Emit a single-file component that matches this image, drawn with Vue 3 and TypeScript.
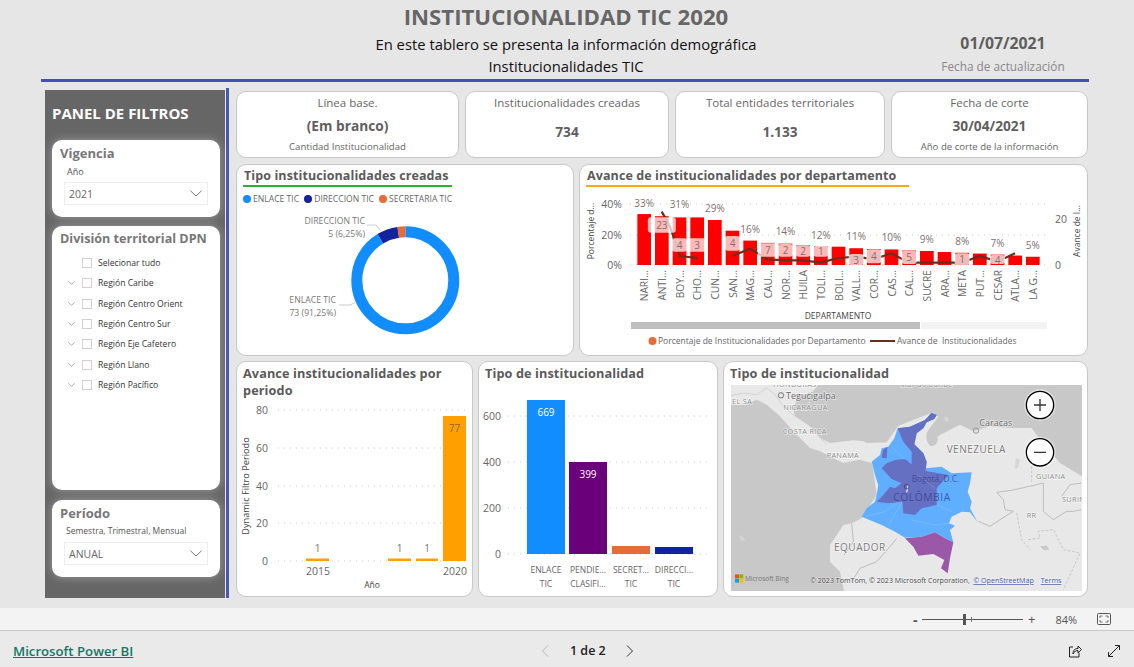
<script setup lang="ts">
interface Dept { name: string; pct: number }
interface Pill { i: number; v: number; top: number; bottom: number; w: number }

const zx = (z: number) => 575 + z / 3
const zy = (z: number) => 160 + z / 3

const depts: Dept[] = [
  { name: 'NARI...', pct: 33.4 }, { name: 'ANTI...', pct: 32 }, { name: 'BOY...', pct: 31.2 }, { name: 'CHO...', pct: 31.2 },
  { name: 'CUN...', pct: 29.5 }, { name: 'SAN...', pct: 22.5 }, { name: 'MAG...', pct: 16 }, { name: 'CAU...', pct: 14.5 },
  { name: 'NOR...', pct: 14 }, { name: 'HUILA', pct: 13 }, { name: 'TOLI...', pct: 12.3 }, { name: 'BOLI...', pct: 12 },
  { name: 'VALL...', pct: 11 }, { name: 'COR...', pct: 10.5 }, { name: 'CAS...', pct: 10.2 }, { name: 'CAL...', pct: 9.5 },
  { name: 'SUCRE', pct: 9.2 }, { name: 'ARA...', pct: 8.5 }, { name: 'META', pct: 8 }, { name: 'PUT...', pct: 7.5 },
  { name: 'CESAR', pct: 6.8 }, { name: 'ATLA...', pct: 6.2 }, { name: 'LA G...', pct: 5.4 },
]
const barX = (i: number) => zx(187 + i * 53)
const barW = 13.7

const pctLabels = [
  { i: 0, t: '33%', y: 130 }, { i: 2, t: '31%', y: 133 }, { i: 4, t: '29%', y: 143 }, { i: 6, t: '16%', y: 208 },
  { i: 8, t: '14%', y: 214 }, { i: 10, t: '12%', y: 224 }, { i: 12, t: '11%', y: 229 }, { i: 14, t: '10%', y: 232 },
  { i: 16, t: '9%', y: 238 }, { i: 18, t: '8%', y: 244 }, { i: 20, t: '7%', y: 250 }, { i: 22, t: '5%', y: 254 },
]

const pills: Pill[] = [
  { i: 1, v: 23, top: 172, bottom: 218, w: 28 }, { i: 2, v: 4, top: 235, bottom: 275, w: 15 }, { i: 3, v: 3, top: 235, bottom: 275, w: 21 },
  { i: 5, v: 4, top: 228, bottom: 272, w: 15 }, { i: 7, v: 7, top: 250, bottom: 290, w: 20 }, { i: 8, v: 2, top: 252, bottom: 290, w: 15 },
  { i: 9, v: 2, top: 256, bottom: 290, w: 15 }, { i: 10, v: 1, top: 258, bottom: 290, w: 15 }, { i: 12, v: 3, top: 282, bottom: 316, w: 15 },
  { i: 13, v: 4, top: 268, bottom: 310, w: 15 }, { i: 15, v: 5, top: 272, bottom: 312, w: 15 }, { i: 18, v: 1, top: 280, bottom: 316, w: 15 },
  { i: 20, v: 4, top: 285, bottom: 312, w: 15 },
]

const toPts = (pts: number[][]) => pts.map(p => `${zx(p[0])},${zy(p[1])}`).join(' ')
const lineA = toPts([[260, 155], [270, 172], [285, 200], [315, 288], [367, 294]])
const lineB = toPts([
  [472, 288], [525, 266], [578, 298], [631, 301], [684, 301], [737, 308], [790, 294], [843, 290], [896, 298],
  [949, 280], [1002, 308], [1055, 308], [1108, 308], [1161, 308], [1214, 288], [1267, 305], [1320, 280],
])

const regions = ['Región Caribe', 'Región Centro Orient', 'Región Centro Sur', 'Región Eje Cafetero', 'Región Llano', 'Región Pacífico']

const ringLen = 2 * Math.PI * 48.5
const slices = [
  { color: '#118dff', share: 0.9125, start: 0 },
  { color: '#12239e', share: 0.0625, start: 0.9125 },
  { color: '#e66c37', share: 0.025, start: 0.975 },
]

const periodTicks = [{ t: '80', y: 410 }, { t: '60', y: 448 }, { t: '40', y: 486 }, { t: '20', y: 523 }, { t: '0', y: 561 }]
const periodBars = [
  { x: 306, top: 558.5, w: 23, label: '1', ly: 548 }, { x: 388, top: 558.5, w: 23, label: '1', ly: 548 },
  { x: 416, top: 558.5, w: 22, label: '1', ly: 548 }, { x: 443, top: 416, w: 23, label: '', ly: 0 },
]
const typeTicks = [{ t: '600', y: 416 }, { t: '400', y: 462 }, { t: '200', y: 508 }, { t: '0', y: 554 }]
const typeBars = [
  { x: 527, top: 400, color: '#118dff', a: 'ENLACE', b: 'TIC' }, { x: 569, top: 462, color: '#6b007b', a: 'PENDIE...', b: 'CLASIFI...' },
  { x: 612, top: 546, color: '#e66c37', a: 'SECRET...', b: 'TIC' }, { x: 655, top: 547, color: '#12239e', a: 'DIRECCI...', b: 'TIC' },
]
</script>

<template>
  <div class="page">
    <header class="head">
      <div class="head-main">
        <h1>INSTITUCIONALIDAD TIC 2020</h1>
        <p>En este tablero se presenta la información demográfica</p>
        <p>Institucionalidades TIC</p>
      </div>
      <div class="head-date">
        <strong>01/07/2021</strong>
        <span>Fecha de actualización</span>
      </div>
    </header>
    <div class="rule"></div>

    <main class="report">
      <aside class="side-wrap">
        <div class="side">
          <h2>PANEL DE FILTROS</h2>
          <section class="filter f-vig">
            <h3>Vigencia</h3>
            <label>Año</label>
            <div class="select">
              <span>2021</span>
              <svg width="12" height="7" viewBox="0 0 12 7"><path d="M.5.8 6 6 11.5.8" fill="none" stroke="#777" /></svg>
            </div>
          </section>
          <section class="filter f-div">
            <h3>División territorial DPN</h3>
            <ul>
              <li><i class="chev-gap"></i><i class="check"></i>Selecionar tudo</li>
              <li v-for="r in regions" :key="r">
                <svg class="chev" width="7" height="4" viewBox="0 0 7 4"><path d="M.3.3 3.5 3.3 6.7.3" fill="none" stroke="#999" stroke-width=".8" /></svg>
                <i class="check"></i>{{ r }}
              </li>
            </ul>
          </section>
          <section class="filter f-per">
            <h3>Período</h3>
            <label>Semestra, Trimestral, Mensual</label>
            <div class="select">
              <span>ANUAL</span>
              <svg width="12" height="7" viewBox="0 0 12 7"><path d="M.5.8 6 6 11.5.8" fill="none" stroke="#777" /></svg>
            </div>
          </section>
        </div>
      </aside>

      <div class="content">
        <div class="row r1">
          <div class="card kpi" style="width: 223px">
            <span class="k-t">Línea base.</span><b>(Em branco)</b><small>Cantidad Institucionalidad</small>
          </div>
          <div class="card kpi" style="width: 204px">
            <span class="k-t">Institucionalidades creadas</span><b class="low">734</b>
          </div>
          <div class="card kpi" style="width: 210px">
            <span class="k-t">Total entidades territoriales</span><b class="low">1.133</b>
          </div>
          <div class="card kpi" style="width: 197px">
            <span class="k-t">Fecha de corte</span><b>30/04/2021</b><small>Año de corte de la información</small>
          </div>
        </div>

        <div class="row r2">
          <div class="card" style="width: 338px">
            <div class="title green">Tipo institucionalidades creadas</div>
            <div class="legend">
              <span><i style="background: #118dff"></i>ENLACE TIC</span>
              <span><i style="background: #12239e"></i>DIRECCION TIC</span>
              <span><i style="background: #e66c37"></i>SECRETARIA TIC</span>
            </div>
            <svg class="chart" width="336" height="148" viewBox="237 207 336 148">
              <circle
                v-for="s in slices"
                :key="s.color"
                cx="405.3"
                cy="280.3"
                r="48.5"
                fill="none"
                :stroke="s.color"
                stroke-width="11"
                :stroke-dasharray="`${s.share * ringLen} ${ringLen}`"
                :stroke-dashoffset="-s.start * ringLen"
                transform="rotate(-90 405.3 280.3)"
              />
              <path d="M367 225h9l5 6M339 305h11l5-2.500" fill="none" stroke="#ccc" />
              <g class="tx" text-anchor="end">
                <text x="365" y="224">DIRECCION TIC</text>
                <text x="365" y="237">5 (6,25%)</text>
                <text x="336" y="303">ENLACE TIC</text>
                <text x="336" y="316">73 (91,25%)</text>
              </g>
            </svg>
          </div>

          <div class="card" style="width: 509px">
            <div class="title orange">Avance de institucionalidades por departamento</div>
            <svg class="chart" width="507" height="164" viewBox="580 191 507 164">
              <path v-for="y in [204, 235, 265]" :key="y" :d="`M630 ${y}H1047`" class="grid" />
              <rect v-for="(d, i) in depts" :key="d.name" :x="barX(i)" :y="265 - d.pct * 1.525" :width="barW" :height="d.pct * 1.525" fill="#ff0000" />
              <polyline :points="lineA" class="trend" />
              <polyline :points="lineB" class="trend" />
              <rect
                v-for="p in pills"
                :key="p.i"
                :x="barX(p.i) + barW / 2 - p.w / 2"
                :y="zy(p.top)"
                :width="p.w"
                :height="(p.bottom - p.top) / 3"
                rx="3"
                fill="#fff"
                fill-opacity=".72"
              />
              <text v-for="p in pills" :key="'v' + p.i" class="tx lab" text-anchor="middle" :x="barX(p.i) + barW / 2" :y="zy((p.top + p.bottom) / 2) + 4">{{ p.v }}</text>
              <text v-for="l in pctLabels" :key="l.t" class="tx lab" text-anchor="middle" :x="barX(l.i) + barW / 2" :y="zy(l.y) + 4">{{ l.t }}</text>
              <g class="tx ax" text-anchor="end">
                <text x="622" y="208">40%</text>
                <text x="622" y="239">20%</text>
                <text x="622" y="269">0%</text>
              </g>
              <g class="tx ax">
                <text x="1055" y="223">20</text>
                <text x="1055" y="269">0</text>
              </g>
              <text class="tx small dark" text-anchor="middle" transform="translate(594 231) rotate(-90)">Porcentaje d...</text>
              <text class="tx small dark" text-anchor="middle" transform="translate(1080 231) rotate(-90)">Avance de I...</text>
              <text
                v-for="(d, i) in depts"
                :key="'n' + d.name"
                class="tx cat"
                text-anchor="end"
                :transform="`translate(${barX(i) + barW / 2 + 4} 270) rotate(-90)`"
              >{{ d.name }}</text>
              <text class="tx small dark" x="838" y="319" text-anchor="middle">DEPARTAMENTO</text>
              <rect x="631" y="322" width="289" height="7" fill="#bfbfbf" />
              <rect x="921" y="322" width="126" height="7" fill="#f3f3f3" />
              <circle cx="652.500" cy="341" r="4" fill="#e66c37" />
              <text class="tx leg" x="658" y="344">Porcentaje de Institucionalidades por Departamento</text>
              <path d="M870 341h25" stroke="#6b2d1c" stroke-width="2" />
              <text class="tx leg" x="897" y="344">Avance de &nbsp;Institucionalidades</text>
            </svg>
          </div>
        </div>

        <div class="row r3">
          <div class="card" style="width: 237px">
            <div class="title plain">Avance institucionalidades por periodo</div>
            <svg class="chart" width="235" height="194" viewBox="237 402 235 194">
              <path v-for="t in periodTicks" :key="t.t" :d="`M278 ${t.y}H465`" class="grid" />
              <text v-for="t in periodTicks" :key="'l' + t.t" class="tx ax" x="268" text-anchor="end" :y="t.y + 4">{{ t.t }}</text>
              <rect v-for="b in periodBars" :key="b.x" :x="b.x" :y="b.top" :width="b.w" :height="561 - b.top" fill="#ffa000" />
              <g v-for="b in periodBars" :key="'t' + b.x">
                <text v-if="b.label" class="tx lab" text-anchor="middle" :x="b.x + b.w / 2" :y="b.ly + 4">{{ b.label }}</text>
              </g>
              <text class="tx lab amber" x="454.500" y="432" text-anchor="middle">77</text>
              <text class="tx ax" x="318" y="575" text-anchor="middle">2015</text>
              <text class="tx ax" x="455" y="575" text-anchor="middle">2020</text>
              <text class="tx small dark" x="372" y="588" text-anchor="middle">Año</text>
              <text class="tx axt dark" text-anchor="middle" transform="translate(249 486) rotate(-90)">Dynamic Filtro Periodo</text>
            </svg>
          </div>

          <div class="card" style="width: 240px">
            <div class="title plain">Tipo de institucionalidad</div>
            <svg class="chart" width="238" height="211" viewBox="479 385 238 211">
              <path v-for="t in typeTicks" :key="t.t" :d="`M508 ${t.y}H712`" class="grid" />
              <text v-for="t in typeTicks" :key="'l' + t.t" class="tx ax" x="501" text-anchor="end" :y="t.y + 4">{{ t.t }}</text>
              <rect v-for="b in typeBars" :key="b.x" :x="b.x" :y="b.top" width="38" :height="554 - b.top" :fill="b.color" />
              <text class="tx lab white" x="546" y="416" text-anchor="middle">669</text>
              <text class="tx lab white" x="588" y="478" text-anchor="middle">399</text>
              <g v-for="b in typeBars" :key="b.a" class="tx small" text-anchor="middle">
                <text :x="b.x + 19" y="573">{{ b.a }}</text>
                <text :x="b.x + 19" y="587">{{ b.b }}</text>
              </g>
            </svg>
          </div>

          <div class="card" style="width: 365px">
            <div class="title plain">Tipo de institucionalidad</div>
            <svg class="map" width="351" height="206" viewBox="33 90 1053 618">
              <rect x="33" y="90" width="1053" height="618" fill="#c8c8c8" />
              <!-- land, west part is drawn in the Central America crop's units -->
              <g transform="translate(30 84)">
                <path d="M0 5H265L250 25 205 42 190 75 195 100 240 130 270 165 300 180 370 172 400 175 440 195 470 215 480 300 425 240 390 230 340 240 310 225 270 205 240 195 195 150 150 100 110 65 80 50 45 65H0Z" fill="#e8e8e8" />
                <path d="M0 38 40 30 80 35 110 15 135 35 160 70 195 100M240 130 290 185" fill="none" stroke="#d2d2d2" stroke-width="3" />
              </g>
              <path d="M430 265 500 262 535 212 640 172 655 185 625 225 628 262 660 240 720 209 760 229 810 214 870 219 935 219 975 274 1020 324 1086 364V708H372L360 650 330 620 330 570 350 540 370 510 395 505 425 490 470 420 456 320Z" fill="#e8e8e8" />
              <path d="M620 235C625 222 640 225 650 240 660 258 645 278 630 272 620 262 618 250 620 235Z" fill="#c8c8c8" />
              <path d="M672 185l12 2 3 10-12 1ZM888 310l12 4-6 24-10 4ZM55 540l12 5 10 15-12-4Z" fill="#d6d6d6" />
              <g transform="translate(720 84)" fill="none" stroke="#bdbdbd" stroke-width="3">
                <path d="M110 328 155 322 230 305 250 300 250 340 250 385 280 410 320 385 340 385 365 380M110 328 130 350 135 380 160 385 120 410 90 430 55 415M305 340 330 305 365 300" />
                <path d="M170 390 185 470 210 500M205 470 240 465 235 445 280 440 310 500 360 510 310 620M215 250V295" stroke-dasharray="8 5" stroke-width="2.500" />
                <path d="M240 490l20-2 8 12-16 2Z" fill="#c8c8c8" stroke="none" />
              </g>
              <path d="M530 550 510 575 470 620 420 640 395 680M395 505 400 560 372 600" fill="none" stroke="#bdbdbd" stroke-width="3" />
              <g class="mtx">
                <text x="540" y="95" class="lt">Mar do Caribe</text>
                <text x="160" y="95" class="lt">HONDURAS</text>
                <text x="36" y="146" class="lt">EL SA</text>
                <text x="198" y="131">Tegucigalpa</text>
                <text x="190" y="166" class="lt">NICARÁGUA</text>
                <text x="188" y="237" class="lt">COSTA RICA</text>
                <text x="320" y="308" class="lt">PANAMÁ</text>
                <text x="778" y="214">Caracas</text>
                <text x="680" y="295" class="big">VENEZUELA</text>
                <text x="948" y="373" class="lt">GUIANA</text>
                <text x="1026" y="440" class="lt">SURIN</text>
                <text x="920" y="489" class="lt">RR</text>
                <text x="342" y="587" class="big">EQUADOR</text>
              </g>
              <!-- Colombia, in the units of the country crop -->
              <g transform="translate(405 150)">
                <path d="M128 70 165 65 210 45 230 23 245 30 238 42 215 52 205 70 185 85 178 118 205 145 215 170 212 190 260 185 290 205 350 202 345 235 338 260 350 290 345 310 368 352 345 322 320 320 290 335 282 355 300 362 285 375 295 412 270 400 240 382 200 395 150 398 120 380 80 360 20 335 35 310 60 290 65 270 70 240 60 210 50 170 75 150 80 130 100 125 118 100Z" fill="#60aeff" />
                <path d="M128 70 165 65 210 45 230 23 245 30 238 42 215 52 205 70 185 85 178 118 205 145 215 170 212 198 280 210 245 250 245 300 200 310 180 330 145 325 142 290 100 295 65 290 85 270 105 245 120 250 140 235 110 222 80 190 95 175 120 165 150 162 170 178 170 140 145 110Z" fill="#6570c2" />
                <path d="M80 158 84 135 97 125 95 160Z" fill="#6570c2" />
                <path d="M150 400 200 395 240 382 270 400 295 412 285 460 278 505 258 490 268 465 235 447 190 452 175 425Z" fill="#9b58a8" />
                <path d="M30 335 90 320 130 290M170 345 240 360 282 355M245 300 290 320M142 290 100 360M190 210 240 250M110 125 150 165" fill="none" stroke="#fff" stroke-opacity=".3" stroke-width="1.500" />
                <path d="M160 240 155 262" stroke="#fff" stroke-width="3.500" />
                <circle cx="155" cy="245" r="7" fill="none" stroke="#3a3f8f" stroke-width="2.500" />
              </g>
              <text x="575" y="381" class="mreg navy">Bogotá, D.C.</text>
              <text x="520" y="437" class="mreg navy big">COLÔMBIA</text>
              <circle cx="183" cy="121" r="8" fill="none" stroke="#777" stroke-width="3" />
              <circle cx="768" cy="227" r="8" fill="none" stroke="#999" stroke-width="3" />
              <circle cx="960" cy="150" r="47" fill="#fff" fill-opacity=".5" />
              <circle cx="960" cy="292" r="47" fill="#fff" fill-opacity=".5" />
              <circle cx="960" cy="150" r="41" fill="#fff" stroke="#000" stroke-width="4" />
              <path d="M942 150H978M960 132V168" stroke="#333" stroke-width="4" />
              <circle cx="960" cy="292" r="41" fill="#fff" stroke="#000" stroke-width="4" />
              <path d="M942 292H978" stroke="#333" stroke-width="4" />
              <rect x="45" y="658" width="12" height="12" fill="#f25022" />
              <rect x="58" y="658" width="12" height="12" fill="#7fba00" />
              <rect x="45" y="671" width="12" height="12" fill="#00a4ef" />
              <rect x="58" y="671" width="12" height="12" fill="#ffb900" />
              <text x="75" y="679" class="bing">Microsoft Bing</text>
              <text x="270" y="684" class="attr">© 2023 TomTom, © 2023 Microsoft Corporation,</text>
              <text x="760" y="684" class="attr link">© OpenStreetMap</text>
              <text x="962" y="684" class="attr link">Terms</text>
            </svg>
          </div>
        </div>
      </div>
    </main>

    <div class="zoombar">
      <span class="zm">-</span>
      <div class="slider"><i class="tick"></i><i class="thumb"></i></div>
      <span class="zp">+</span>
      <span class="zpct">84%</span>
      <svg width="14" height="12" viewBox="0 0 14 12" class="fit">
        <rect x=".5" y=".5" width="13" height="11" rx="1" fill="none" stroke="#555" />
        <path d="M3 5V3h2.500M11 5V3H8.500M3 7v2h2.500M11 7v2H8.500" fill="none" stroke="#555" stroke-width=".8" />
      </svg>
    </div>

    <footer class="foot">
      <a class="pbi">Microsoft Power BI</a>
      <nav class="pager">
        <svg width="8" height="12" viewBox="0 0 8 12"><path d="M7 .5 1.500 6 7 11.500" fill="none" stroke="#b5b5b5" /></svg>
        <b>1 de 2</b>
        <svg width="8" height="12" viewBox="0 0 8 12"><path d="M1 .5 6.500 6 1 11.500" fill="none" stroke="#333" /></svg>
      </nav>
      <div class="acts">
        <svg width="14" height="14" viewBox="0 0 14 14">
          <path d="M5 3H1.500V13H11V9M5 10c0-4 2-5.500 5-5.500V2l3.500 3.500L10 9V6.500C8 6.500 6 7.500 5 10Z" fill="none" stroke="#222" />
        </svg>
        <svg width="14" height="14" viewBox="0 0 14 14">
          <path d="M1.500 8v4.500H6M8 1.500h4.500V6M1.800 12.200 12.200 1.800" fill="none" stroke="#222" />
        </svg>
      </div>
    </footer>
  </div>
</template>

<style scoped>
.page {
  width: 1134px;
  height: 667px;
  overflow: hidden;
  display: flex;
  flex-direction: column;
  background: #e6e6e6;
  font-family: 'Open Sans', 'Noto Sans', sans-serif;
  color: #666;
}
.head {
  height: 79px;
  display: flex;
  flex: none;
}
.head-main {
  width: 1132px;
  text-align: center;
  flex: none;
  margin-right: -1132px;
}
h1 {
  margin: 3px 0 0;
  font-size: 22.2px;
  line-height: 27px;
  font-weight: 700;
  color: #666;
}
.head-main p {
  margin: 0;
  font-size: 14.8px;
  line-height: 22px;
  color: #111;
}
.head-main h1 + p {
  margin-top: 3px;
}
.head-date {
  margin-left: 902px;
  width: 202px;
  display: flex;
  flex-direction: column;
  align-items: center;
  padding-top: 34px;
}
.head-date strong {
  font-size: 15.8px;
  line-height: 18px;
  color: #5e5e5e;
}
.head-date span {
  margin-top: 7px;
  font-size: 11.8px;
  line-height: 15px;
  color: #888;
}
.rule {
  flex: none;
  height: 3px;
  width: 1048px;
  margin-left: 41px;
  background: #4450b4;
}
.report {
  flex: none;
  height: 526px;
  display: flex;
  padding-left: 45px;
}
.side-wrap {
  flex: none;
  width: 184px;
  height: 510px;
  margin-top: 6px;
  padding-top: 2px;
  border-right: 3px solid #4a55b8;
  box-sizing: border-box;
}
.side {
  height: 508px;
  margin-right: 1px;
  background: #666;
  padding: 0 7px;
  box-sizing: border-box;
  display: flex;
  flex-direction: column;
}
.side h2 {
  margin: 13px 0 0;
  font-size: 15px;
  line-height: 20px;
  color: #fff;
  font-weight: 700;
  height: 20px;
  white-space: nowrap;
}
.filter {
  background: #fff;
  border-radius: 10px;
  box-shadow: 0 0 10px rgba(255, 255, 255, 0.35);
  flex: none;
  box-sizing: border-box;
  padding: 4px 12px;
  width: 168px;
}
.filter h3 {
  margin: 0 0 0 -4px;
  font-size: 13px;
  line-height: 18px;
  font-weight: 700;
  color: #777;
  white-space: nowrap;
}
.f-div h3 {
  font-size: 12.6px;
}
.filter label {
  display: block;
  font-size: 9px;
  line-height: 12px;
  color: #555;
  white-space: nowrap;
  margin-top: 4px;
  margin-bottom: 4px;
}
.f-vig {
  height: 77px;
  margin-top: 17px;
}
.f-vig label {
  margin-left: 3px;
}
.f-div {
  height: 264px;
  margin-top: 9px;
}
.f-per {
  height: 77px;
  margin-top: 10px;
}
.f-per label {
  margin-left: 2px;
  margin-top: 3px;
  margin-bottom: 5px;
  font-size: 8.5px;
}
.select {
  height: 23px;
  width: 144px;
  box-sizing: border-box;
  border: 1px solid #eee;
  display: flex;
  align-items: center;
  justify-content: space-between;
  padding: 0 5px 0 4px;
  font-size: 10.5px;
  color: #666;
}
ul {
  list-style: none;
  margin: 5px 0 0;
  padding: 0;
}
li {
  display: flex;
  align-items: center;
  height: 20.3px;
  font-size: 8.6px;
  color: #333;
  white-space: nowrap;
}
.chev {
  flex: none;
  width: 7px;
  margin-left: 4px;
  margin-right: 7px;
}
.chev-gap {
  width: 18px;
  flex: none;
}
.check {
  flex: none;
  width: 8px;
  height: 8px;
  border: 1px solid #d2ced2;
  margin-right: 6px;
  box-sizing: content-box;
}
.content {
  margin-left: 7px;
  padding-top: 9px;
  width: 852px;
  flex: none;
}
.row {
  display: flex;
  justify-content: space-between;
}
.r1 {
  height: 67px;
}
.r2 {
  height: 192px;
  margin-top: 6px;
}
.r3 {
  height: 236px;
  margin-top: 5px;
}
.card {
  background: #fff;
  border: 1px solid #c8c8c8;
  border-radius: 10px;
  box-sizing: border-box;
  flex: none;
  overflow: hidden;
}
.kpi {
  display: flex;
  flex-direction: column;
  align-items: center;
  padding-top: 2px;
}
.k-t {
  font-size: 11.5px;
  line-height: 18px;
  color: #666;
}
.kpi b {
  font-size: 13.7px;
  line-height: 20px;
  margin-top: 4px;
  color: #5f5f5f;
}
.kpi b.low {
  margin-top: 10px;
}
.kpi small {
  font-size: 9.6px;
  line-height: 12px;
  margin-top: 5px;
  color: #666;
}
.title {
  font-size: 12.5px;
  font-weight: 700;
  color: #5a5a5a;
  line-height: 17px;
  white-space: nowrap;
  letter-spacing: 0.1px;
}
.green,
.orange {
  margin-top: 2px;
  margin-left: 6px;
  height: 20px;
  box-sizing: border-box;
  margin-bottom: 4px;
  padding-left: 1px;
}
.green {
  width: 209px;
  border-bottom: 2px solid #2fb02f;
}
.orange {
  width: 323px;
  border-bottom: 2px solid #f7a71c;
}
.plain {
  padding: 3px 6px;
  white-space: normal;
  font-size: 12.7px;
}
.legend {
  height: 16px;
  display: flex;
  align-items: center;
  padding-left: 6px;
  font-size: 8.6px;
  color: #666;
  gap: 5px;
  white-space: nowrap;
}
.legend span {
  display: flex;
  align-items: center;
}
.legend i {
  width: 8px;
  height: 8px;
  border-radius: 50%;
  margin-right: 2px;
}
.chart,
.map {
  display: block;
}
.map {
  margin-left: 7px;
}
.grid {
  stroke: #ccc;
  stroke-width: 1;
  stroke-dasharray: 1 5;
  fill: none;
}
.trend {
  fill: none;
  stroke: #6b2d1c;
  stroke-width: 2.2;
}
.tx {
  font-size: 8.7px;
  fill: #777;
}
.lab {
  font-size: 10px;
  fill: #806f6f;
}
.amber {
  fill: #8a6a3a;
}
.white {
  fill: #fff;
}
.ax {
  font-size: 10.5px;
  fill: #666;
}
.small {
  font-size: 8.5px;
  fill: #666;
}
.axt {
  font-size: 9.2px;
}
.dark {
  fill: #444;
}
.small.dark {
  fill: #444;
}
.cat {
  font-size: 10.2px;
  fill: #666;
}
.leg {
  font-size: 8.5px;
  fill: #666;
}
.mtx text {
  font-size: 27px;
  fill: #666;
  stroke: #fff;
  stroke-width: 4px;
  stroke-opacity: 0.6;
  paint-order: stroke;
}
.mtx .lt {
  fill: #8a8a8a;
  letter-spacing: 1px;
  font-size: 22px;
}
.mtx .big {
  font-size: 30px;
  fill: #7a7a7a;
  letter-spacing: 1.500px;
}
.mreg {
  font-size: 25px;
  stroke: none;
}
.navy {
  fill: #3a3f8f;
  fill-opacity: 0.8;
}
.mreg.big {
  font-size: 31px;
  letter-spacing: 1.500px;
}
.bing {
  font-size: 19.5px;
  fill: #777;
}
.attr {
  font-size: 21.3px;
  fill: #444;
  stroke: #fff;
  stroke-width: 3px;
  stroke-opacity: 0.5;
  paint-order: stroke;
}
.link {
  fill: #3a55a8;
  text-decoration: underline;
}
.zoombar {
  flex: none;
  height: 22px;
  background: #f3f3f3;
  border-bottom: 1px solid #c8c8c8;
  display: flex;
  align-items: center;
  color: #555;
  box-sizing: content-box;
}
.zm {
  margin-left: 913px;
  width: 9px;
  font-size: 14px;
  font-weight: 700;
}
.slider {
  width: 101px;
  height: 1px;
  background: #555;
  position: relative;
}
.thumb {
  position: absolute;
  left: 41px;
  top: -5px;
  width: 3px;
  height: 11px;
  background: #555;
}
.tick {
  position: absolute;
  left: 49px;
  top: -2px;
  width: 1px;
  height: 5px;
  background: #777;
}
.zp {
  margin-left: 5px;
  font-size: 13px;
}
.zpct {
  margin-left: 20px;
  font-size: 11px;
  width: 34px;
}
.fit {
  margin-left: 8px;
}
.foot {
  flex: 1;
  background: #eaeaea;
  display: flex;
  align-items: center;
  padding-left: 13px;
  padding-top: 3px;
}
.pbi {
  font-size: 13.2px;
  color: #117865;
  text-decoration: underline;
  font-weight: 600;
}
.pager {
  display: flex;
  align-items: center;
  margin-left: 408px;
  width: 93px;
  justify-content: space-between;
}
.pager b {
  font-size: 12.5px;
  font-weight: 600;
  color: #222;
}
.acts {
  margin-left: auto;
  margin-right: 13px;
  display: flex;
  gap: 25px;
}
</style>

<style>
html,
body {
  margin: 0;
  background: #e6e6e6;
}
</style>
